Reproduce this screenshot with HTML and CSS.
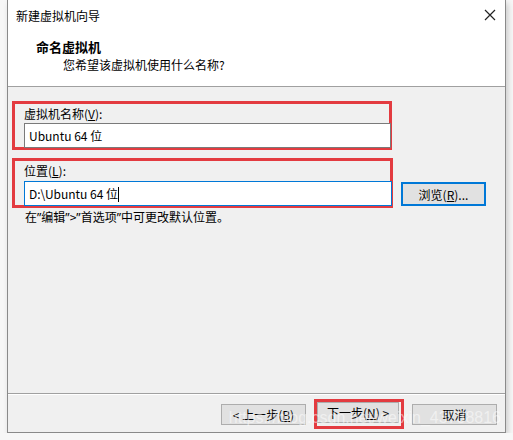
FILE: index.html
```html
<!DOCTYPE html>
<html lang="zh-CN">
<head>
  <meta charset="UTF-8">
  <title>新建虚拟机向导</title>
  <link rel="stylesheet" href="styles.css">
</head>
<body>
  <div class="window">
    <div class="titlebar">
      <span class="title">新建虚拟机向导</span>
      <span class="close">
        <svg width="12" height="12" viewBox="0 0 12 12"><path d="M1 1 L11 11 M11 1 L1 11" stroke="#222" stroke-width="1.2" fill="none"/></svg>
      </span>
    </div>
    <div class="header">
      <div class="heading">命名虚拟机</div>
      <div class="subheading">您希望该虚拟机使用什么名称?</div>
    </div>
    <div class="content">
      <div class="group group-name">
        <label class="label">虚拟机名称(<u>V</u>):</label>
        <div class="input">Ubuntu 64 位</div>
      </div>
      <div class="row">
        <div class="group group-path">
          <label class="label">位置(<u>L</u>):</label>
          <div class="input focused">D:\Ubuntu 64 位<span class="caret"></span></div>
        </div>
        <button class="btn btn-browse" type="button">浏览(<u>R</u>)...</button>
      </div>
      <div class="hint">在<span class="q">”</span>编辑<span class="q">”</span>&gt;<span class="q">”</span>首选项<span class="q">”</span>中可更改默认位置。</div>
    </div>
    <div class="footer">
      <button class="btn" type="button">&lt; 上一步(<u>B</u>)</button>
      <span class="mark"><button class="btn" type="button">下一步(<u>N</u>) &gt;</button></span>
      <button class="btn" type="button">取消</button>
      <span class="watermark">https://blog.csdn.net/weixin_43738816</span>
    </div>
  </div>
</body>
</html>
```

FILE: styles.css
```css
body {
  margin: 0;
  background-color: #f7f7f7;
  font-family: "Noto Sans CJK SC", "Noto Sans", sans-serif;
  font-size: 12px;
  color: #000;
}

.window {
  position: relative;
  margin-left: 7px;
  width: 497px;
  height: 432px;
  border: 1px solid #8a8a8a;
  border-top: none;
  background-color: #f0f0f0;
  box-shadow: 2px 3px 6px rgba(0, 0, 0, 0.18);
  display: flex;
  flex-direction: column;
}

.titlebar {
  height: 30px;
  background-color: #fff;
  display: flex;
  align-items: center;
  justify-content: space-between;
  padding: 0 9px 0 8px;
}

.close {
  display: flex;
}

.header {
  height: 56px;
  background-color: #fff;
  border-bottom: 1px solid #a0a0a0;
  padding-left: 28px;
}

.heading {
  font-weight: bold;
  font-size: 13px;
  margin-top: 8px;
  line-height: 18px;
}

.subheading {
  padding-left: 27px;
  line-height: 18px;
}

.content {
  flex: 1;
  padding: 14px 0 0 4px;
  border-bottom: 1px solid #a0a0a0;
  box-shadow: 0 1px 0 #fff;
}

.group {
  border: 3px solid #e33b40;
  padding: 0 0 0 9px;
  box-sizing: border-box;
  width: 380px;
  height: 49px;
}

.group-path {
  width: 381px;
  height: 50px;
}

.label {
  display: block;
  height: 18px;
  line-height: 18px;
  margin-top: 1px;
}

.input {
  height: 25px;
  box-sizing: border-box;
  border: 1px solid #7a7a7a;
  background-color: #fff;
  padding-left: 4px;
  line-height: 23px;
  margin-right: -2px;
}

.group-path .input {
  height: 25px;
  margin-top: 1px;
}

.focused {
  border-color: #0078d7;
}

.caret {
  display: inline-block;
  width: 1px;
  height: 15px;
  background-color: #000;
  vertical-align: -3px;
}

.row {
  display: flex;
  align-items: flex-start;
  margin-top: 8px;
}

.btn {
  font-family: inherit;
  font-size: 12px;
  height: 21px;
  width: 85px;
  padding: 0;
  background-color: #e1e1e1;
  border: 1px solid #adadad;
  color: #000;
}

.btn-browse {
  margin: 24px 0 0 8px;
  height: 24px;
  border: 2px solid #0078d7;
}

.hint {
  margin: 0 0 0 13px;
  line-height: 18px;
}

.q {
  font-family: "Noto Sans", sans-serif;
}

.footer {
  height: 38px;
  display: flex;
  align-items: center;
  justify-content: flex-end;
  gap: 8px;
  padding-right: 8px;
}

.footer .btn {
  margin-top: 3px;
}

.mark {
  display: flex;
  border: 3px solid #e33b40;
  padding: 0 2px 3px 0;
  margin: 2px 0 0 0;
}

.mark .btn {
  margin-top: 0;
  width: 82px;
}

.watermark {
  position: absolute;
  right: 4px;
  bottom: 5px;
  font-family: "Liberation Sans", sans-serif;
  font-size: 16px;
  color: rgba(255, 255, 255, 0.5);
  pointer-events: none;
}
```
